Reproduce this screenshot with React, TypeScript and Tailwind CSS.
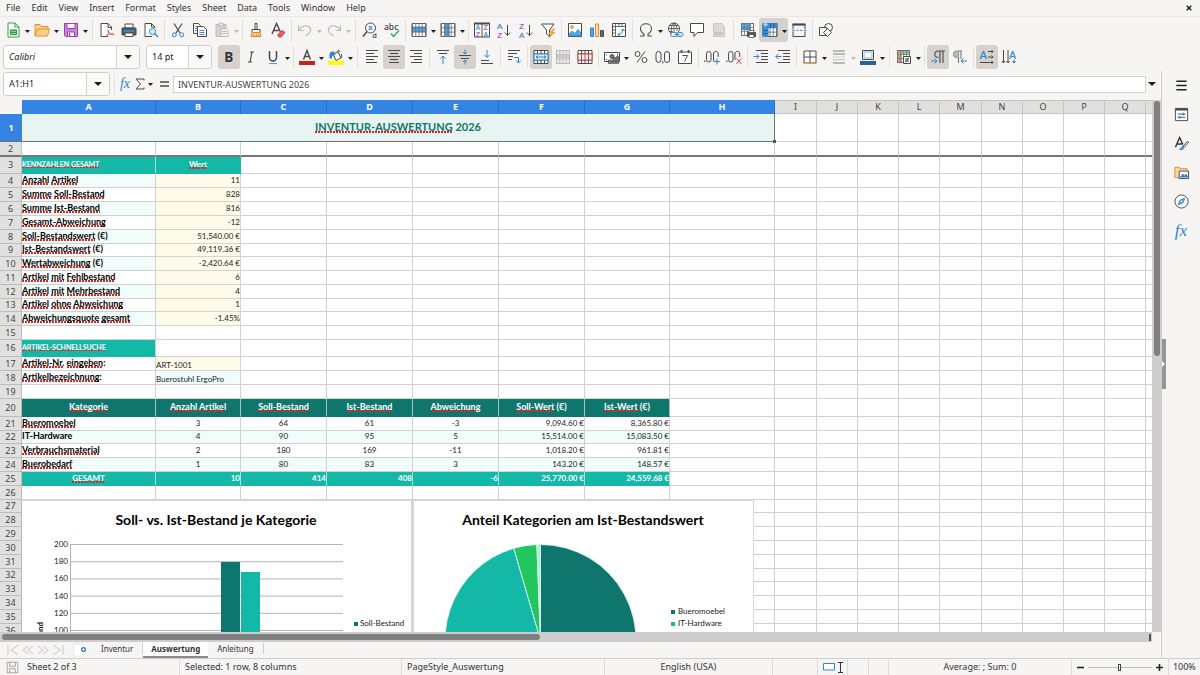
import React from "react";
import type { ReactNode } from "react";

/* ---------- shared pieces ---------- */

const INK = "#4a4a4a";
const BLUE = "#2f86cf";
const GRAY = "#b9b9b7";

function Svg({ children, size = 16 }: { children: ReactNode; size?: number }) {
  return (
    <svg width={size} height={size} viewBox="0 0 16 16" fill="none" stroke={INK} strokeWidth="1" aria-hidden="true" className="overflow-visible">
      {children}
    </svg>
  );
}

function Caret({ off = false, big = false }: { off?: boolean; big?: boolean }) {
  return (
    <svg width={big ? 8 : 5} height={big ? 4 : 3} viewBox="0 0 8 4" preserveAspectRatio="none" aria-hidden="true">
      <path d="M0 0h8L4 4z" fill={off ? GRAY : "#1c1c1c"} />
    </svg>
  );
}

type Tool = { name: string; icon?: ReactNode; menu?: boolean; on?: boolean; off?: boolean; sep?: "s" | "w" };

function Tools({ items }: { items: Tool[] }) {
  return (
    <>
      {items.map((t, i) =>
        t.sep ? (
          <span key={i} className={t.sep === "w" ? "flex h-[22px] w-[7px] shrink-0 justify-center" : "flex h-[22px] w-[5px] shrink-0 justify-center"}>
            <span className="w-px bg-[#e2e1df]" />
          </span>
        ) : (
          <span key={i} className={t.on ? "flex h-6 shrink-0 rounded-[3px] bg-[#d5d1cd]" : "flex h-6 shrink-0"}>
            <button type="button" aria-label={t.name} disabled={t.off} className="flex h-6 w-[22px] items-center justify-center">
              {t.icon}
            </button>
            {t.menu && (
              <button type="button" aria-label={t.name + " options"} className="flex h-6 w-[7px] items-center justify-center pt-[2px]">
                <Caret off={t.off} />
              </button>
            )}
          </span>
        ),
      )}
    </>
  );
}

const S: Tool = { name: "", sep: "s" };
const W: Tool = { name: "", sep: "w" };

/* ---------- icons ---------- */

const grid = (x: number, y: number, w: number, h: number, stroke = "#777") => (
  <path
    d={`M${x} ${y}h${w}v${h}h-${w}zM${x} ${y + h / 3}h${w}M${x} ${y + (2 * h) / 3}h${w}M${x + w / 4} ${y}v${h}M${x + w / 2} ${y}v${h}M${x + (3 * w) / 4} ${y}v${h}`}
    stroke={stroke}
    strokeWidth="0.8"
  />
);

const glyph = (s: string, x: number, y: number, size: number, fill: string, weight = 400) => (
  <text x={x} y={y} fontSize={size} fill={fill} stroke="none" fontFamily="Noto Sans, sans-serif" fontWeight={weight}>
    {s}
  </text>
);

const letter = (s: string, x: number, y: number, size: number, fill: string) => (
  <text x={x} y={y} fontSize={size} fill={fill} stroke={fill} strokeWidth="0.2" fontFamily="Liberation Sans, sans-serif">
    {s}
  </text>
);

const bars = (list: number[][], stroke = INK) => (
  <path d={list.map(([x, y, w]) => `M${x} ${y}h${w}`).join("")} stroke={stroke} />
);

const I: Record<string, ReactNode> = {
  new: (
    <Svg>
      <path d="M3 1h7l4 4v10H3z" fill="#fff" stroke="#2f9e44" />
      <path d="M10 1v4h4" stroke="#2f9e44" />
      <path d="M5 7.500h7v5.500H5z" fill="#2f9e44" stroke="none" />
      <path d="M6 9.500h5M6 11.500h5" stroke="#d8f3dc" strokeWidth="0.600" />
    </Svg>
  ),
  open: (
    <Svg>
      <path d="M1 14V2.500h5l1.500 2H14V7" fill="#f9d28a" stroke="#e0912f" />
      <path d="M1 14L3.500 7H15.500L13.500 14z" fill="#fbd08a" stroke="#e0912f" />
    </Svg>
  ),
  save: (
    <Svg>
      <path d="M1.500 1.500h13v13h-12l-1-1z" fill="#c987d6" stroke="#9c3fb0" />
      <path d="M4 1.500h8v5H4z" fill="#fff" stroke="#9c3fb0" />
      <path d="M4.500 10h7v4.500h-7z" fill="#fff" stroke="#9c3fb0" />
      <path d="M6.500 11v3.500" stroke="#9c3fb0" strokeWidth="1.500" />
    </Svg>
  ),
  pdf: (
    <Svg>
      <path d="M9 14.500H2V1.500h7l3.500 3.500v3" fill="#fff" />
      <path d="M9 1.500v4h3.500" />
      <path d="M7 14.500c2-2 3-4 2.500-6s-1.500 0 .5 2 3 2.500 4.500 2.200-.5-1.500-3-.8-4 1.600-4.500 2.600z" stroke="#e0525b" strokeWidth="0.900" />
    </Svg>
  ),
  print: (
    <Svg>
      <path d="M4 2h8v4H4z" fill="#fff" />
      <path d="M1 6h14v7H1z" fill="#5a5a5a" stroke="#4a4a4a" />
      <path d="M3 8h10v2H3z" fill={BLUE} stroke="none" />
      <path d="M4 11h8v3.500H4z" fill="#fff" />
    </Svg>
  ),
  preview: (
    <Svg>
      <path d="M12 6V5L8.500 1.500H2v13h7" fill="#fff" />
      <path d="M8.500 1.500V5H12" />
      <circle cx="9.500" cy="9.500" r="3" stroke={BLUE} fill="#dcecfa" />
      <path d="M11.700 11.700L15 15" stroke={BLUE} strokeWidth="1.300" />
    </Svg>
  ),
  cut: (
    <Svg>
      <path d="M4 1.500l6 9.500M12 1.500L6 11" strokeWidth="1.200" />
      <circle cx="4.300" cy="12.800" r="2" stroke={BLUE} />
      <circle cx="11.700" cy="12.800" r="2" stroke={BLUE} />
    </Svg>
  ),
  copy: (
    <Svg>
      <path d="M5.500 11.500h-4v-10h5l2 2" fill="#fff" />
      <path d="M5.500 4.500h6l3 3v7h-9z" fill="#fff" />
      <path d="M7.500 8.500h5M7.500 10.500h5M7.500 12.500h5M3 4.500h2M3 6.500h2M3 8.500h2" stroke={BLUE} strokeWidth="0.900" />
    </Svg>
  ),
  paste: (
    <Svg>
      <path d="M2 2.500h10v12H2z" fill="#d4d3d1" stroke="#bbbab8" />
      <path d="M5 1h4v3H5z" fill="#eee" stroke="#bbbab8" />
      <path d="M7 6.500h5l2 2v6H7z" fill="#f2f1f0" stroke="#bbbab8" />
      <path d="M8.500 9.500h4M8.500 11.500h4" stroke="#bbbab8" />
    </Svg>
  ),
  brush: (
    <Svg>
      <path d="M7 1.500h2v6H7z" fill="#fff" />
      <path d="M4 7.500h8v3H4z" fill="#fff" />
      <path d="M4 10.500h8l1 4H3z" fill="#fbd08a" stroke="#e0852f" />
      <path d="M6 12v2M8.500 12v2M10.500 12v2" stroke="#e0852f" strokeWidth="0.700" />
    </Svg>
  ),
  clear: (
    <Svg>
      <path d="M2 12L6.500 1.500 10.500 10M4 8.500h5" strokeWidth="1.400" />
      <path d="M7.500 13l4.500-4.500 3 2-4 4.500H9z" fill="#ee5560" stroke="#d93f4b" />
    </Svg>
  ),
  undo: (
    <Svg>
      <path d="M1.500 3.500v5h5M1.500 8.500C4 4 9 2.500 12 5s2 6-3.500 9" stroke={GRAY} strokeWidth="1.100" />
    </Svg>
  ),
  redo: (
    <Svg>
      <path d="M14.500 3.500v5h-5M14.500 8.500C12 4 7 2.500 4 5s-2 6 3.500 9" stroke={GRAY} strokeWidth="1.100" />
    </Svg>
  ),
  find: (
    <Svg>
      <circle cx="8.500" cy="6" r="5" fill="#fff" />
      <path d="M5 9.500L1 14.500" strokeWidth="1.500" />
      {letter("a", 6.2, 8, 7.500, BLUE)}
      {letter("d", 10.500, 15.500, 7.500, INK)}
    </Svg>
  ),
  spell: (
    <Svg>
      {glyph("abc", 0, 7.500, 8.500, "#3c3c3c", 500)}
      <path d="M7 11.500l2.500 3L15 8.500" stroke="#2fa56a" strokeWidth="1.400" />
    </Svg>
  ),
  row: (
    <Svg>
      <path d="M1 1.500h14v13H1z" fill="#fff" />
      <path d="M1 5h14v4.500H1z" fill="#53a4e6" stroke={BLUE} strokeWidth="0.800" />
      {grid(1.500, 1.500, 13, 13, "#6a6a6a")}
    </Svg>
  ),
  col: (
    <Svg>
      <path d="M1 1.500h14v13H1z" fill="#fff" />
      <path d="M4.700 1.500h4.500v13H4.700z" fill="#53a4e6" stroke={BLUE} strokeWidth="0.800" />
      {grid(1.500, 1.500, 13, 13, "#6a6a6a")}
    </Svg>
  ),
  sort: (
    <Svg>
      <path d="M.5 1.500h15v13.500H.5z" fill="#fff" />
      <path d="M0 1.500h16" strokeWidth="2" />
      <path d="M8 2v13" />
      {letter("A", 1.800, 8, 6.500, BLUE)}
      {letter("Z", 2, 14.500, 6.500, "#a349b5")}
      {letter("Z", 9.800, 8, 6.500, "#a349b5")}
      {letter("A", 9.600, 14.500, 6.500, BLUE)}
    </Svg>
  ),
  asc: (
    <Svg>
      {letter("A", 1, 6.800, 8, BLUE)}
      {letter("Z", 1.200, 15.500, 8, "#a349b5")}
      <path d="M11.500 3v10M8.800 10.500l2.700 3 2.700-3" />
    </Svg>
  ),
  desc: (
    <Svg>
      {letter("Z", 1.200, 6.800, 8, "#a349b5")}
      {letter("A", 1, 15.500, 8, BLUE)}
      <path d="M11.500 3v10M8.800 10.500l2.700 3 2.700-3" />
    </Svg>
  ),
  filter: (
    <Svg>
      <path d="M1.500 2h12.500L9.500 8v6.500L6.500 12V8z" fill="#fff" />
      <path d="M12.500 7L8.500 12h3L9 15.500 15 10.500h-3L14.500 7z" fill="#f7b35a" stroke="#e68a22" strokeWidth="0.600" />
    </Svg>
  ),
  image: (
    <Svg>
      <path d="M1.500 1.500h13v13h-13z" fill="#fff" />
      <circle cx="5" cy="5" r="1.500" fill="#f7b35a" stroke="#e68a22" strokeWidth="0.700" />
      <path d="M2 12l3-3 3 2.500 3-4L14 11v3H2z" fill="#53a4e6" stroke={BLUE} strokeWidth="0.800" />
    </Svg>
  ),
  chart: (
    <Svg>
      <path d="M1.500 6h3v8.500h-3z" fill="#53a4e6" stroke={BLUE} />
      <path d="M6.500 2h3v12.500h-3z" fill="#fde0b2" stroke="#e68a22" />
      <path d="M11.500 8.500h3v6h-3z" fill="#6a6a6a" />
    </Svg>
  ),
  pivot: (
    <Svg>
      <path d="M1.500 1.500h13v13h-13z" fill="#fff" />
      <path d="M1.500 4.500h13M4.500 1.500v13M8 1.500v3M11 1.500v3M1.500 8h3M1.500 11h3" strokeWidth="0.800" />
      <path d="M7 12.500c3 0 5-2 5-5M10.500 9L12 7l1.700 2M8.700 11L6.800 12.500l2 1.500" stroke={BLUE} />
    </Svg>
  ),
  omega: (
    <Svg>
      <path d="M2 14h4v-2C3.500 10.500 2.500 8.500 2.500 6.500 2.500 3.700 5 1.800 8 1.800s5.500 1.900 5.500 4.700c0 2-1 4-3.500 5.500v2h4" strokeWidth="1.100" />
    </Svg>
  ),
  link: (
    <Svg>
      <circle cx="7" cy="6.500" r="5.500" fill="#fff" />
      <path d="M1.500 6.500h11M7 1v9M7 1C3.500 4 3.500 9 6 11.500M7 1c3 2.500 3.500 6 2.500 8M2.500 3.500h9M2.500 9.500h3" strokeWidth="0.800" />
      <path d="M5 10h11v5H5z" fill="#f6f5f4" stroke="none" />
      <path d="M5.500 10.500h3a1.800 1.800 0 0 1 0 4h-3a1.800 1.800 0 0 1 0-4zM11.500 10.500h2.500a1.800 1.800 0 0 1 0 4h-2.500a1.800 1.800 0 0 1 0-4z" stroke={BLUE} />
      <path d="M7.500 12.500h5" stroke={BLUE} />
    </Svg>
  ),
  comment: (
    <Svg>
      <path d="M1.500 1.500h13v9H8.500l-3.500 4v-4H1.500z" fill="#fff" />
    </Svg>
  ),
  hf: (
    <Svg>
      <path d="M2.500 1.500h8l3 3v10h-11z" fill="#dbdad8" stroke="#c6c5c3" />
      <path d="M4 10h8v3H4z" fill="#c6c5c3" stroke="none" />
    </Svg>
  ),
  area: (
    <Svg>
      <path d="M1.500 1.500h12v12h-12z" fill="#fff" />
      <path d="M1.500 1.500h8.500v6H1.500z" fill="#53a4e6" stroke={BLUE} />
      {grid(1.500, 1.500, 12, 12)}
      <path d="M7.500 10.500h8v4h-8z" fill="#555" />
      <path d="M9 8.500h5v2H9zM9 12.500h5v3H9z" fill="#fff" strokeWidth="0.800" />
    </Svg>
  ),
  freeze: (
    <Svg>
      <path d="M1 1.500h14v13H1z" fill="#fff" />
      {grid(1.500, 1.500, 13, 13, "#666")}
      <path d="M1 1.500h14v4H6v9H1z" fill="#3b8fd8" stroke={BLUE} />
      <path d="M1.500 8.500h4M1.500 11.500h4M8.500 1.500v4M12 1.500v4" stroke="#175a9c" />
      <path d="M3.500 0v5M1 2.500h5M1.800 .8l3.400 3.400M5.200 .8L1.800 4.200" stroke="#d5e8f9" strokeWidth="0.600" />
    </Svg>
  ),
  split: (
    <Svg>
      <path d="M1.500 2.500h13" strokeWidth="2.200" />
      <path d="M2 2v5M14 2v5M2 9.500v5h12v-5" />
      <path d="M1 8.300h3M5.500 8.300h2M9 8.300h2M12.500 8.300h3" stroke={BLUE} />
    </Svg>
  ),
  shapes: (
    <Svg>
      <circle cx="10.500" cy="5.500" r="4" fill="#f6f5f4" />
      <path d="M1.500 5.500h7v8h-7z" fill="#f6f5f4" />
      <path d="M9.500 6.500l4 4-4 4-4-4z" fill="#f6f5f4" />
    </Svg>
  ),
  bold: <Svg>{glyph("B", 3.300, 13, 13.500, "#333", 700)}</Svg>,
  italic: (
    <Svg>
      <path d="M7 3h4M5 13h4M9 3L7 13" strokeWidth="1.200" />
    </Svg>
  ),
  under: (
    <Svg>
      <path d="M4.500 2v6.500a3.500 3.500 0 0 0 7 0V2" strokeWidth="1.500" />
      <path d="M4 14.500h8" stroke="#53a4e6" strokeWidth="1.200" />
    </Svg>
  ),
  fcolor: (
    <Svg>
      <path d="M4.500 10.500L8 1.500l3.500 9M5.500 7.500h5" strokeWidth="1.400" />
      <path d="M0 12h16v4H0z" fill="#c9211e" stroke="none" />
    </Svg>
  ),
  bcolor: (
    <Svg>
      <path d="M5 5l5-2 3 6-5 2.500z" fill="#fff" />
      <path d="M10 3c-1-2 1.500-2.500 2 0M13 5c1.500 1 .5 3.500 0 4" />
      <path d="M1.500 9.500V5c0-1.500 2-3 4-2.500L8 5l-4 2v2.500z" fill={BLUE} stroke="none" />
      <path d="M0 12h16v4H0z" fill="#ffff00" stroke="none" />
    </Svg>
  ),
  left: <Svg>{bars([[2, 1.500, 12], [2, 4.500, 8], [2, 7.500, 12], [2, 10.500, 8], [2, 13.500, 11]])}</Svg>,
  center: <Svg>{bars([[2, 1.500, 12], [4, 4.500, 8], [2, 7.500, 12], [4, 10.500, 8], [3, 13.500, 10]])}</Svg>,
  right: <Svg>{bars([[2, 1.500, 12], [6, 4.500, 8], [2, 7.500, 12], [6, 10.500, 8], [3, 13.500, 11]])}</Svg>,
  top: (
    <Svg>
      {bars([[2, 1.500, 12], [4, 4.500, 8]])}
      <path d="M8 15V7.500M5.500 9.500L8 7l2.500 2.500" stroke={BLUE} />
    </Svg>
  ),
  middle: (
    <Svg>
      {bars([[2, 6.500, 12], [4, 9.500, 8]])}
      <path d="M8 .5v4.500M6 3l2 2 2-2M8 15.500v-4.500M6 13l2-2 2 2" stroke={BLUE} />
    </Svg>
  ),
  bottom: (
    <Svg>
      {bars([[2, 14.500, 12], [2, 11.500, 8]])}
      <path d="M8 1v7M5.500 6L8 8.500 10.500 6" stroke={BLUE} />
    </Svg>
  ),
  wrap: (
    <Svg>
      {bars([[2, 1.500, 12], [2, 4.500, 9], [2, 7.500, 5], [2, 10.500, 4]])}
      <path d="M8 8.500h4.500V13M10 11.500l2.500 2.500 2.500-2.500" stroke={BLUE} />
    </Svg>
  ),
  merge: (
    <Svg>
      <path d="M1 1.500h14v13H1z" fill="#fff" />
      <path d="M1 5h14M1 11h14M4.500 1.500V5M8 1.500V5M11.500 1.500V5M4.500 11v3.500M8 11v3.500M11.500 11v3.500" />
      <path d="M1 5h14v6H1z" fill="#e3f1fc" stroke={BLUE} />
      <path d="M3 8h10M5 6.500L3 8l2 1.500M11 6.500L13 8l-2 1.500" stroke={BLUE} />
    </Svg>
  ),
  mergeoff: (
    <Svg>
      <path d="M1.500 1.500h13v13h-13z" fill="#ecebea" stroke={GRAY} />
      {grid(1.500, 1.500, 13, 13, GRAY)}
      <path d="M2 5.500h12v4H2z" fill="#c9c8c6" stroke="none" />
    </Svg>
  ),
  unmerge: (
    <Svg>
      <path d="M1 1.500h14v13H1z" fill="#fff" />
      <path d="M1 5h14M1 11h14M4.500 1.500V5M8 1.500V5M11.500 1.500V5M4.500 11v3.500M8 11v3.500M11.500 11v3.500" />
      <path d="M1 5h14v6H1zM4.500 5v6M8 5v6M11.500 5v6" fill="#fff" stroke="#d6403f" />
    </Svg>
  ),
  money: (
    <Svg>
      <path d="M.5 3.500h15v9H.5z" fill="#fff" />
      <circle cx="8" cy="7.500" r="2" fill="#777" />
      <path d="M2.500 5.500v1M13.500 5v1.500M2.500 10v1" />
      <path d="M4.500 11h4v3.500h-4zM9.500 8.500h2v6h-2zM12.500 7.500h2v7h-2z" fill="#777" strokeWidth="0.700" />
    </Svg>
  ),
  percent: (
    <Svg>
      <circle cx="4.500" cy="5" r="2.500" />
      <circle cx="11.500" cy="11" r="2.500" />
      <path d="M12 2.500L4 13.500" />
    </Svg>
  ),
  number: (
    <Svg>
      <rect x="1" y="2.500" width="5" height="11" rx="2.500" />
      <rect x="9.500" y="2.500" width="5" height="11" rx="2.500" />
      <path d="M7.800 12v2.500" />
    </Svg>
  ),
  date: (
    <Svg>
      <path d="M1.500 3h13v11.500h-13z" fill="#fff" />
      <path d="M4.500 1v3M11.500 1v3" strokeWidth="1.600" />
      <path d="M5.500 6.500h5L7.500 12.500" />
    </Svg>
  ),
  decadd: (
    <Svg>
      <path d="M.8 11.500v1.500" strokeWidth="1.200" />
      <rect x="2.500" y="2.500" width="4.500" height="10.500" rx="2.200" />
      <path d="M9.500 11V5c0-3.500 4.700-3.500 4.700 0v3M9.500 11c0 1 .5 1.700 1 2" />
      <path d="M10 12.500h6M13 9.500v6" stroke={BLUE} />
    </Svg>
  ),
  decdel: (
    <Svg>
      <path d="M.8 11.500v1.500" strokeWidth="1.200" />
      <rect x="2.500" y="2.500" width="4.500" height="10.500" rx="2.200" />
      <path d="M9 11V5c0-3.500 4.700-3.500 4.700 0v3" />
      <path d="M10.500 9.500l5 5.500M15.500 9.500l-5 5.500" stroke="#d6403f" />
    </Svg>
  ),
  indent: (
    <Svg>
      {bars([[3, 1.500, 12], [8, 4.500, 7], [8, 7.500, 7], [8, 10.500, 7], [3, 13.500, 12]])}
      <path d="M.5 7.500H6M3.500 5L6 7.500l-2.500 2.500" stroke={BLUE} />
    </Svg>
  ),
  outdent: (
    <Svg>
      {bars([[3, 1.500, 12], [8, 4.500, 7], [8, 7.500, 7], [8, 10.500, 7], [3, 13.500, 12]])}
      <path d="M.8 7.500H6.500M3.300 5L.8 7.500l2.500 2.500" stroke={BLUE} />
    </Svg>
  ),
  borders: (
    <Svg>
      <path d="M2 2h12v12H2z" fill="#fff" />
      <path d="M2 8h12M8 2v12" />
      <path d="M1.500 14.300h13" stroke="#f0a33c" />
    </Svg>
  ),
  bstyle: (
    <Svg>
      <path d="M2 2h12M2 5h12" stroke={GRAY} strokeWidth="2" />
      <path d="M2 8h12" stroke={GRAY} strokeDasharray="1.500 1" />
      <path d="M2 10.800h12" stroke={GRAY} />
      <path d="M2 14h12" stroke={GRAY} strokeWidth="2" />
    </Svg>
  ),
  bcol: (
    <Svg>
      <path d="M2.500 1.500h11v9h-11z" fill="#fff" />
      <path d="M4 3h8v6H4z" stroke="#7fb6e6" />
      <path d="M0 12h16v4H0z" fill="#2a6099" stroke="none" />
    </Svg>
  ),
  cond: (
    <Svg>
      <path d="M1.500 1.500h12v12h-12z" fill="#fff" />
      <path d="M2 2h4v3H2zM2 9h4v4H2z" fill="#f28b82" stroke="none" />
      <path d="M6 2h7v3H6zM2 5h4v4H2z" fill="#7ccf8a" stroke="none" />
      {grid(1.500, 1.500, 12, 12)}
      <path d="M7.500 7.500h7v7h-7z" fill="#fff" />
      <path d="M9 10h4M9 12h4M12.300 8.800l-2.500 4.600" />
    </Svg>
  ),
  ltrp: (
    <Svg>
      <path d="M8.500 8.500C3 8.500 4 2 8.500 2H15M10 2v12M13 2v12" strokeWidth="1.100" />
      <path d="M1 12h6M4.500 9.500L7 12l-2.500 2.500" stroke={BLUE} />
    </Svg>
  ),
  rtlp: (
    <Svg>
      <path d="M5.500 8.500C0 8.500 1 2 5.500 2H10M6.500 2v12M9 2v8" stroke="#777" strokeWidth="1.100" />
      <path d="M5.500 8.500C1 8.500 2 2 5.500 2h1v6.500z" fill="#bbb" stroke="none" />
      <path d="M15 12H9M11.500 9.500L9 12l2.500 2.500" stroke={BLUE} />
    </Svg>
  ),
  ltr: (
    <Svg>
      {letter("A", 0.500, 9.500, 11, BLUE)}
      <path d="M9 2.500h5M12.500 1L14 2.500 12.500 4M9 8h5M12.500 6.500L14 8l-1.500 1.500M1 13.500h13M12.500 12l1.500 1.500-1.500 1.500" />
    </Svg>
  ),
  ttb: (
    <Svg>
      {letter("A", 8, 9.500, 10.500, BLUE)}
      <path d="M2.500 1v13M1 12l1.500 2L4 12M7 1v13M5.500 12L7 14l1.500-2M13 11v3M11.500 12.500L13 14l1.500-1.500" />
    </Svg>
  ),
};

const standardTools: Tool[] = [
  { name: "New", icon: I.new, menu: true },
  { name: "Open", icon: I.open, menu: true },
  { name: "Save", icon: I.save, menu: true },
  W,
  { name: "Export as PDF", icon: I.pdf },
  { name: "Print", icon: I.print },
  { name: "Print preview", icon: I.preview },
  S,
  { name: "Cut", icon: I.cut },
  { name: "Copy", icon: I.copy },
  { name: "Paste", icon: I.paste, menu: true, off: true },
  S,
  { name: "Clone formatting", icon: I.brush },
  { name: "Clear formatting", icon: I.clear },
  S,
  { name: "Undo", icon: I.undo, menu: true, off: true },
  { name: "Redo", icon: I.redo, menu: true, off: true },
  W,
  { name: "Find and replace", icon: I.find },
  { name: "Spelling", icon: I.spell },
  S,
  { name: "Row", icon: I.row, menu: true },
  { name: "Column", icon: I.col, menu: true },
  S,
  { name: "Sort", icon: I.sort },
  { name: "Sort ascending", icon: I.asc },
  { name: "Sort descending", icon: I.desc },
  { name: "AutoFilter", icon: I.filter },
  S,
  { name: "Insert image", icon: I.image },
  { name: "Insert chart", icon: I.chart },
  { name: "Pivot table", icon: I.pivot },
  S,
  { name: "Special character", icon: I.omega, menu: true },
  { name: "Insert hyperlink", icon: I.link },
  { name: "Insert comment", icon: I.comment },
  { name: "Headers and footers", icon: I.hf, off: true },
  W,
  { name: "Define print area", icon: I.area },
  { name: "Freeze rows and columns", icon: I.freeze, menu: true, on: true },
  { name: "Split window", icon: I.split },
  S,
  { name: "Show draw functions", icon: I.shapes },
];

const formatTools: Tool[] = [
  { name: "Bold", icon: I.bold, on: true },
  { name: "Italic", icon: I.italic },
  { name: "Underline", icon: I.under, menu: true },
  S,
  { name: "Font color", icon: I.fcolor, menu: true },
  { name: "Background color", icon: I.bcolor, menu: true },
  W,
  { name: "Align left", icon: I.left },
  { name: "Center horizontally", icon: I.center, on: true },
  { name: "Align right", icon: I.right },
  S,
  { name: "Align top", icon: I.top },
  { name: "Center vertically", icon: I.middle, on: true },
  { name: "Align bottom", icon: I.bottom },
  S,
  { name: "Wrap text", icon: I.wrap },
  S,
  { name: "Merge and center cells", icon: I.merge, on: true },
  { name: "Merge cells", icon: I.mergeoff, off: true },
  { name: "Unmerge cells", icon: I.unmerge },
  S,
  { name: "Format as currency", icon: I.money, menu: true },
  { name: "Format as percent", icon: I.percent },
  { name: "Format as number", icon: I.number },
  { name: "Format as date", icon: I.date },
  S,
  { name: "Add decimal place", icon: I.decadd },
  { name: "Delete decimal place", icon: I.decdel },
  S,
  { name: "Increase indent", icon: I.indent },
  { name: "Decrease indent", icon: I.outdent },
  S,
  { name: "Borders", icon: I.borders, menu: true },
  { name: "Border style", icon: I.bstyle, menu: true, off: true },
  { name: "Border color", icon: I.bcol, menu: true },
  W,
  { name: "Conditional formatting", icon: I.cond, menu: true },
  S,
  { name: "Left to right", icon: I.ltrp, on: true },
  { name: "Right to left", icon: I.rtlp },
  S,
  { name: "Text direction from left to right", icon: I.ltr, on: true },
  { name: "Text direction from top to bottom", icon: I.ttb },
];

function Combo({ label, value, className, italic }: { label: string; value: string; className: string; italic?: boolean }) {
  return (
    <span className={"flex h-6 shrink-0 overflow-hidden rounded-[3px] border border-[#cfccc9] bg-white " + className}>
      <input
        aria-label={label}
        defaultValue={value}
        className={"min-w-0 flex-1 bg-transparent pl-[5px] text-[9px] text-[#222] outline-none " + (italic ? "italic" : "")}
      />
      <button type="button" aria-label={label + " list"} className="flex w-[23px] items-center justify-center border-l border-[#d5d2cf] bg-[#f9f9f8]">
        <Caret big />
      </button>
    </span>
  );
}

/* ---------- sheet data ---------- */

const columns: [string, number][] = [
  ["A", 134], ["B", 85], ["C", 86], ["D", 86], ["E", 86], ["F", 86], ["G", 85], ["H", 105], ["I", 42],
  ["J", 41], ["K", 41], ["L", 41], ["M", 42], ["N", 41], ["O", 41], ["P", 41], ["Q", 41],
];

type Kind = "label" | "labelMint" | "input" | "lookup" | "entry" | "section" | "sectionC" | "head" | "num" | "numMint" | "cen" | "cenMint" | "total" | "totalC";

const kinds: Record<Kind, string> = {
  label: "text-left text-[9px] leading-[10px] font-bold text-black border-[#d0d0d0]",
  labelMint: "text-left text-[9px] leading-[10px] font-bold text-black bg-[#f0fdfa] border-[#d0d0d0]",
  input: "text-right text-[8px] leading-[10px] text-[#222] bg-[#fffbeb] border-[#d6d4cc]",
  entry: "text-left text-[8px] leading-[14px] text-[#222] bg-[#fffbeb] border-[#d6d4cc]",
  lookup: "text-left text-[8px] leading-[14px] text-[#222] bg-[#f0fdfa] border-[#d0d0d0]",
  section: "text-left text-[7px] leading-[10px] font-bold text-white bg-[#14b8a6] border-b-[#14b8a6] border-r-[#a5ded7]",
  sectionC: "text-center text-[8px] leading-[10px] font-bold text-white bg-[#14b8a6] border-b-[#14b8a6] border-r-[#14b8a6]",
  head: "text-center text-[9px] leading-[10px] font-bold text-white bg-[#0f766e] border-b-[#0f766e] border-r-[#a3c5c2]",
  num: "text-right text-[8px] leading-[10px] text-[#222] border-[#d0d0d0]",
  numMint: "text-right text-[8px] leading-[10px] text-[#222] bg-[#f0fdfa] border-[#d0d0d0]",
  cen: "text-center text-[8px] leading-[10px] text-[#222] border-[#d0d0d0]",
  cenMint: "text-center text-[8px] leading-[10px] text-[#222] bg-[#f0fdfa] border-[#d0d0d0]",
  total: "text-right text-[8px] leading-[10px] font-bold text-white bg-[#14b8a6] border-b-[#14b8a6] border-r-[#a5ded7]",
  totalC: "text-center text-[8px] leading-[10px] font-bold text-white bg-[#14b8a6] border-b-[#14b8a6] border-r-[#a5ded7]",
};

const checked: Kind[] = ["label", "labelMint", "section", "sectionC", "head", "totalC"];

const kpis: [string, string][] = [
  ["Anzahl Artikel", "11"],
  ["Summe Soll-Bestand", "828"],
  ["Summe Ist-Bestand", "816"],
  ["Gesamt-Abweichung", "-12"],
  ["Soll-Bestandswert (€)", "51,540.00 €"],
  ["Ist-Bestandswert (€)", "49,119.36 €"],
  ["Wertabweichung (€)", "-2,420.64 €"],
  ["Artikel mit Fehlbestand", "6"],
  ["Artikel mit Mehrbestand", "4"],
  ["Artikel ohne Abweichung", "1"],
  ["Abweichungsquote gesamt", "-1.45%"],
];

const categories: string[][] = [
  ["Bueromoebel", "3", "64", "61", "-3", "9,094.60 €", "8,365.80 €"],
  ["IT-Hardware", "4", "90", "95", "5", "15,514.00 €", "15,083.50 €"],
  ["Verbrauchsmaterial", "2", "180", "169", "-11", "1,018.20 €", "961.81 €"],
  ["Buerobedarf", "1", "80", "83", "3", "143.20 €", "148.57 €"],
];

const heights = [
  28, 15, 17, 14, 14, 14, 14, 14, 13, 14, 14, 14, 13, 14, 14, 17, 14, 14, 14, 18, 14, 13, 14, 14, 14, 14, 13, 14, 14, 14,
  14, 13, 14, 14, 14, 14,
];

const cells: Record<number, [string, Kind][]> = {
  3: [["KENNZAHLEN GESAMT", "section"], ["Wert", "sectionC"]],
  16: [["ARTIKEL-SCHNELLSUCHE", "section"]],
  17: [["Artikel-Nr. eingeben:", "label"], ["ART-1001", "entry"]],
  18: [["Artikelbezeichnung:", "label"], ["Buerostuhl ErgoPro", "lookup"]],
  20: ["Kategorie", "Anzahl Artikel", "Soll-Bestand", "Ist-Bestand", "Abweichung", "Soll-Wert (€)", "Ist-Wert (€)"].map(
    (t) => [t, "head"] as [string, Kind],
  ),
  25: ["GESAMT", "10", "414", "408", "-6", "25,770.00 €", "24,559.68 €"].map(
    (t, i) => [t, i === 0 ? "totalC" : "total"] as [string, Kind],
  ),
};
kpis.forEach(([a, b], i) => {
  cells[4 + i] = [[a, i % 2 === 0 ? "labelMint" : "label"], [b, "input"]];
});
categories.forEach((row, i) => {
  const mint = i % 2 === 1;
  cells[21 + i] = row.map((t, c) => [
    t,
    c === 0 ? (mint ? "labelMint" : "label") : c < 5 ? (mint ? "cenMint" : "cen") : mint ? "numMint" : "num",
  ]);
});

/* red zigzag under words the spell checker does not know */
const squiggle =
  "bg-[linear-gradient(45deg,transparent_30%,#dc2626_30%,#dc2626_60%,transparent_60%),linear-gradient(135deg,transparent_30%,#dc2626_30%,#dc2626_60%,transparent_60%)] bg-[length:3px_2px] bg-bottom-left bg-repeat-x";

function Checked({ text }: { text: string }) {
  return (
    <>
      {text.split(" ").map((word, i) => {
        const plain = /^[(\d]|^IT-/.test(word);
        const core = word.replace(/:$/, "");
        return (
          <React.Fragment key={i}>
            {i > 0 && " "}
            {plain ? word : <span className={squiggle}>{core}</span>}
            {!plain && word !== core && ":"}
          </React.Fragment>
        );
      })}
    </>
  );
}

function Sheet() {
  return (
    <table className="w-full table-fixed border-separate border-spacing-0 bg-white">
      <colgroup>
        <col className="w-[22px]" />
        {columns.map(([c, w]) => (
          <col key={c} style={{ width: w }} />
        ))}
        <col />
      </colgroup>
      <thead>
        <tr className="h-[14px] text-[9px] leading-[12px]">
          <th className="bg-[#f6f5f4] p-0" />
          {columns.map(([c], i) => (
            <th
              key={c}
              className={
                i < 8
                  ? "overflow-hidden border-r border-[#2b6fc2] bg-[#3584e4] p-0 font-bold text-white"
                  : "overflow-hidden border-t border-r border-b border-[#c4c4c4] bg-[#e0e0df] p-0 font-normal text-[#444]"
              }
            >
              <div className="h-3">{c}</div>
            </th>
          ))}
          <th className="border-t border-b border-[#c4c4c4] bg-[#e0e0df] p-0" />
        </tr>
      </thead>
      <tbody>
        {heights.map((h, r) => {
          const n = r + 1;
          const row = cells[n] ?? [];
          const frozen = n === 2;
          return (
            <tr key={n} style={{ height: h }}>
              <th
                className={
                  (n === 1
                    ? "bg-[#3584e4] font-bold text-white border-b border-[#6d7371]"
                    : frozen
                      ? "bg-[#e0e0df] font-normal text-[#444] border-b-2 border-b-[#777] border-r border-r-[#c4c4c4]"
                      : "bg-[#e0e0df] font-normal text-[#444] border-r border-b border-[#bdbdbd]") + " p-0 text-[9px] leading-[12px]"
                }
              >
                <div className="h-3">{n}</div>
              </th>
              {n === 1 && (
                <td colSpan={8} className="relative border-r border-b border-[#6d7371] bg-[#e8f4f1] p-0 text-center text-[11px] leading-[14px] font-bold text-[#0f766e]">
                  <div className="h-4 font-[Lato,sans-serif]">
                    <Checked text="INVENTUR-AUSWERTUNG 2026" />
                  </div>
                  <span className="absolute -right-[2px] -bottom-[2px] size-[3px] bg-[#555]" />
                </td>
              )}
              {Array.from({ length: n === 1 ? 10 : 18 }, (_, k) => {
                const c = n === 1 ? k + 8 : k;
                const cell = row[c];
                const edge = c === 17 ? "" : "border-r ";
                return (
                  <td
                    key={c}
                    className={
                      edge +
                      (frozen ? "border-b-2 border-r-[#d0d0d0] border-b-[#777] " : "border-b ") +
                      (cell ? kinds[cell[1]] + " " : frozen ? "" : "border-[#d0d0d0] ") +
                      "p-0 whitespace-nowrap"
                    }
                  >
                    {cell && (
                      <div className="h-3 font-[Lato,sans-serif]">
                        {checked.includes(cell[1]) ? <Checked text={cell[0]} /> : cell[0]}
                      </div>
                    )}
                  </td>
                );
              })}
            </tr>
          );
        })}
      </tbody>
    </table>
  );
}

/* ---------- charts ---------- */

function BarChart() {
  return (
    <svg width="390" height="140" viewBox="0 0 390 140" fontFamily="Lato, sans-serif" role="img" aria-label="Soll- vs. Ist-Bestand je Kategorie">
      <rect width="390" height="140" fill="#fff" />
      <path d="M389.500 0v140M0 .5h390" stroke="#d9d9d9" fill="none" />
      <text x="194" y="25" textAnchor="middle" fontSize="14" fontWeight="700">
        Soll- vs. Ist-Bestand je Kategorie
      </text>
      {[200, 180, 160, 140, 120, 100].map((v, i) => (
        <g key={v}>
          <path d={`M48 ${44.5 + i * 17.2}h273`} stroke="#b3b3b3" />
          <text x="46" y={47 + i * 17.2} textAnchor="end" fontSize="8" fill="#222">
            {v}
          </text>
        </g>
      ))}
      <path d="M48.500 45v95" stroke="#b3b3b3" />
      <rect x="199" y="62" width="19" height="78" fill="#0f766e" />
      <rect x="219" y="72" width="19" height="68" fill="#14b8a6" />
      <text transform="translate(21 151) rotate(-90)" fontSize="8" fontWeight="700">
        Bestand
      </text>
      <rect x="332" y="122" width="4" height="4" fill="#0f766e" />
      <text x="338" y="126" fontSize="8" fill="#222">
        Soll-Bestand
      </text>
      <rect x="332" y="133" width="4" height="4" fill="#14b8a6" />
      <text x="338" y="138" fontSize="8" fill="#222">
        Ist-Bestand
      </text>
    </svg>
  );
}

function PieChart() {
  const cx = 127.5;
  const cy = 140;
  const r = 95.5;
  const slices: [string, number, string][] = [
    ["Bueromoebel", 8365.8, "#0f766e"],
    ["IT-Hardware", 15083.5, "#14b8a6"],
    ["Verbrauchsmaterial", 961.81, "#22c55e"],
    ["Buerobedarf", 148.57, "#a7f3d0"],
  ];
  const total = slices.reduce((s, x) => s + x[1], 0);
  let at = 0;
  return (
    <svg width="341" height="140" viewBox="0 0 341 140" fontFamily="Lato, sans-serif" role="img" aria-label="Anteil Kategorien am Ist-Bestandswert">
      <rect width="341" height="140" fill="#fff" />
      <path d="M340.500 0v140M.5 0v140M0 .5h341" stroke="#d9d9d9" fill="none" />
      <text x="170" y="25" textAnchor="middle" fontSize="14" fontWeight="700">
        Anteil Kategorien am Ist-Bestandswert
      </text>
      {slices.map(([name, v, fill]) => {
        const a0 = (at / total) * 2 * Math.PI;
        at += v;
        const a1 = (at / total) * 2 * Math.PI;
        const p = (a: number) => `${cx + r * Math.sin(a)} ${cy - r * Math.cos(a)}`;
        return (
          <path key={name} d={`M${cx} ${cy}L${p(a0)}A${r} ${r} 0 ${a1 - a0 > Math.PI ? 1 : 0} 1 ${p(a1)}z`} fill={fill} stroke="#e6fff6" strokeWidth="0.800" />
        );
      })}
      {slices.slice(0, 3).map(([name, , fill], i) => (
        <g key={name}>
          <rect x="258" y={110 + i * 12} width="4" height="4" fill={fill} />
          <text x="265" y={114 + i * 12} fontSize="8" fill="#222">
            {name}
          </text>
        </g>
      ))}
    </svg>
  );
}

/* ---------- page ---------- */

const sidebar: [string, ReactNode][] = [
  ["Sidebar settings", <Svg size={15}><path d="M2.500 3.500h11M2.500 8h11M2.500 12.500h11" stroke="#222" strokeWidth="1.600" /></Svg>],
  ["Properties", <Svg size={15}><path d="M1.500 1.500h13v13h-13z" fill="#fff" /><path d="M1.500 2.500h13" strokeWidth="2.500" /><path d="M4 7.500h8M4 11h8" /><path d="M10 6v3M6 9.500v3" stroke={BLUE} /><path d="M9 7.500h3M4 11h3" stroke={BLUE} /></Svg>],
  ["Styles", <Svg size={15}><path d="M1.500 12L6 1.500 9.500 9M3 8.500h6" stroke="#333" strokeWidth="1.500" /><path d="M9.500 11L14.500 5.500l1 1L11 12z" fill="#fff" /><path d="M6 14.500c1 0 1.500-3 3-3.500l1.500 1.500c-.5 2-3 2.500-4.500 2z" fill="#53a4e6" stroke={BLUE} /></Svg>],
  ["Gallery", <Svg size={15}><path d="M1 13.500V2.500h4.500l1 1.500H14v9.500z" fill="#fbd9a6" stroke="#e0852f" /><path d="M5.500 6.500h10v8h-10z" fill="#fff" /><path d="M6.500 13l3-3.500 2 2 1.500-2 2 3.500z" fill={BLUE} stroke={BLUE} strokeWidth="0.600" /></Svg>],
  ["Navigator", <Svg size={15}><circle cx="8" cy="8" r="7" fill="#fff" /><path d="M4.500 11.500L6.500 6.500 11.500 4.500 9.500 9.500z" fill="#53a4e6" stroke={BLUE} /><circle cx="8" cy="8" r="1" fill="#fff" stroke="none" /></Svg>],
];

const statusCell = "flex min-w-0 shrink-0 items-center border-r border-[#dddbd9] whitespace-nowrap";

export default function App() {
  return (
    <div className="flex h-screen flex-col overflow-hidden bg-[#f6f5f4] font-['Noto_Sans',sans-serif] text-[9px] leading-[12px] text-[#333]">
      <nav className="flex h-[17px] shrink-0 items-center border-b border-[#e8e7e5] pl-[6px]">
        {["File", "Edit", "View", "Insert", "Format", "Styles", "Sheet", "Data", "Tools", "Window", "Help"].map((m) => (
          <button key={m} type="button" className="mr-[11px]">
            {m}
          </button>
        ))}
        <button type="button" aria-label="Close document" className="mr-2 ml-auto">
          <svg width="6" height="6" viewBox="0 0 6 6" aria-hidden="true">
            <path d="M.7.7l4.600 4.600M5.300.7L.7 5.300" stroke="#222" strokeWidth="1.500" />
          </svg>
        </button>
      </nav>

      <div className="flex h-[26px] shrink-0 items-center overflow-hidden pl-[2px]">
        <Tools items={standardTools} />
      </div>

      <div className="flex h-7 shrink-0 items-center overflow-hidden pl-[3px]">
        <Combo label="Font name" value="Calibri" italic className="w-[137px]" />
        <Combo label="Font size" value="14 pt" className="mx-[6px] w-[66px]" />
        <Tools items={formatTools} />
      </div>

      <div className="flex min-h-0 flex-1">
        <div className="flex min-w-0 flex-1 flex-col">
          <div className="flex h-[29px] shrink-0 items-center pb-[3px] pl-[3px]">
            <Combo label="Name box" value="A1:H1" className="w-[107px]" />
            <span className="ml-1 h-5 w-px bg-[#e2e1df]" />
            <button type="button" className="ml-1 w-3 font-['Liberation_Serif',serif] text-[14px] text-[#2f86cf] italic">
              fx
            </button>
            <button type="button" aria-label="Select function" className="ml-1 flex items-center gap-[3px]">
              <svg width="10" height="12" viewBox="0 0 10 12" fill="none" aria-hidden="true">
                <path d="M9 2.500V1H1l4.500 5L1 11h8V9.500" stroke={INK} />
              </svg>
              <Caret />
            </button>
            <button type="button" aria-label="Formula" className="ml-[7px]">
              <svg width="9" height="8" viewBox="0 0 9 8" aria-hidden="true">
                <path d="M0 2h9M0 6h9" stroke={INK} strokeWidth="1.600" />
              </svg>
            </button>
            <input
              aria-label="Input line"
              defaultValue="INVENTUR-AUSWERTUNG 2026"
              className="ml-1 h-[17px] min-w-0 flex-1 border border-[#d5d2cf] bg-white pl-1 text-[9px] text-[#444] outline-none"
            />
            <button type="button" aria-label="Expand formula bar" className="flex h-4 w-[15px] items-center justify-center pr-1">
              <Caret big />
            </button>
          </div>

          <div className="flex min-h-0 flex-1">
            <div className="flex min-w-0 flex-1 flex-col">
              <div className="relative min-h-0 flex-1 overflow-hidden">
                <Sheet />
                <div className="absolute top-[400px] left-[22px] flex gap-px">
                  <BarChart />
                  <PieChart />
                </div>
              </div>
              <div className="flex h-[10px] shrink-0 items-center bg-[#cdcdcd] pl-[2px]">
                <div className="h-[6px] w-[46.8%] rounded-full bg-[#808080]" />
                <div className="mr-px ml-auto h-[7px] w-[2px] bg-[#555]" />
              </div>
            </div>
            <div className="flex w-[9px] shrink-0 flex-col pb-[10px]">
              <div className="flex flex-1 justify-center bg-[#cdcdcd] pt-[1px]">
                <div className="h-[48%] w-[6px] rounded-full bg-[#808080]" />
              </div>
            </div>
          </div>

          <div className="flex h-4 shrink-0 items-stretch text-[8px]">
            <div className="flex items-center gap-px pl-[6px]">
              {["M2 1v10M12 1L5 6l7 5", "M7 2L2 6l5 4M12 2L7 6l5 4", "M2 2l5 4-5 4M7 2l5 4-5 4", "M2 1l7 5-7 5M12 1v10"].map((d, i) => (
                <button key={i} type="button" aria-label={["First sheet", "Previous sheet", "Next sheet", "Last sheet"][i]}>
                  <svg width="14" height="12" viewBox="0 0 14 12" fill="none" aria-hidden="true">
                    <path d={d} stroke="#d6d5d3" strokeWidth="1.400" />
                  </svg>
                </button>
              ))}
            </div>
            <button type="button" aria-label="Add sheet" className="ml-2 flex items-center">
              <svg width="14" height="14" viewBox="0 0 14 14" aria-hidden="true">
                <path d="M1 1h9v12H1z" fill="#fff" stroke="#dcdbd9" strokeWidth=".6" />
                <circle cx="10.500" cy="6.500" r="2.500" fill="#3b76c4" />
                <path d="M9 6.500h3M10.500 5v3" stroke="#fff" strokeWidth=".8" />
              </svg>
            </button>
            <button type="button" className="my-px mb-1 ml-[5px] border-r border-[#cfcdcb] px-[9px]">
              Inventur
            </button>
            <button type="button" className="border-b-2 border-[#8a8a8a] bg-white px-2 font-bold">
              Auswertung
            </button>
            <button type="button" className="my-px mb-1 border-r border-[#cfcdcb] px-[9px]">
              Anleitung
            </button>
          </div>
        </div>

        <aside className="relative flex w-[39px] shrink-0 flex-col items-center gap-[14px] border-l border-[#d0cecc] pt-[7px]">
          {sidebar.map(([name, icon]) => (
            <button key={name} type="button" aria-label={name}>
              {icon}
            </button>
          ))}
          <button type="button" aria-label="Functions" className="font-['Liberation_Serif',serif] text-[17px] leading-[15px] text-[#2f86cf] italic">
            fx
          </button>
          <button type="button" aria-label="Hide sidebar" className="absolute top-[268px] left-0 flex h-[50px] w-[4px] items-center bg-[#959595]">
            <svg width="3" height="6" viewBox="0 0 3 6" aria-hidden="true">
              <path d="M0 0l3 3-3 3z" fill="#fff" />
            </svg>
          </button>
        </aside>
      </div>

      <footer className="flex h-[17px] shrink-0 items-stretch border-t border-[#cfcdcb]">
        <div className={statusCell + " w-[15%] gap-2 pl-[6px]"}>
          <Svg size={13}>
            <path d="M1.500 1.500h13v13h-13zM4.500 1.500v5h7v-5M4.500 14.500v-5h7v5" stroke="#999" />
          </Svg>
          Sheet 2 of 3
        </div>
        <div className={statusCell + " w-[18.5%] pl-[5px]"}>Selected: 1 row, 8 columns</div>
        <div className={statusCell + " w-[16.9%] pl-[5px]"}>PageStyle_Auswertung</div>
        <div className={statusCell + " w-[14%] justify-center"}>English (USA)</div>
        <div className={statusCell + " w-[3.8%]"} />
        <div className={statusCell + " w-[2.5%] justify-center gap-[3px]"}>
          <svg width="12" height="8" viewBox="0 0 12 8" aria-hidden="true">
            <path d="M.5.5h11v6.500H.5z" fill="#fff" stroke={BLUE} />
          </svg>
          <svg width="5" height="11" viewBox="0 0 5 11" aria-hidden="true">
            <path d="M0 .5h5M0 10.500h5M2.500 0v11" stroke="#333" />
          </svg>
        </div>
        <div className={statusCell + " w-[1.7%]"} />
        <div className={statusCell + " w-[1.7%]"} />
        <div className={statusCell + " w-[15.2%] justify-center"}>Average: ; Sum: 0</div>
        <div className={statusCell + " w-[8.1%] gap-1 px-[5px]"}>
          <button type="button" aria-label="Zoom out" className="flex">
            <svg width="7" height="7" viewBox="0 0 7 7" aria-hidden="true">
              <path d="M0 3.500h7" stroke="#222" strokeWidth="1.600" />
            </svg>
          </button>
          <input
            type="range"
            aria-label="Zoom"
            min={0}
            max={200}
            defaultValue={98}
            className="h-[7px] min-w-0 flex-1 appearance-none bg-linear-to-b from-transparent from-43% via-[#888] via-43% to-transparent to-57% [&::-webkit-slider-thumb]:h-[7px] [&::-webkit-slider-thumb]:w-[3px] [&::-webkit-slider-thumb]:appearance-none [&::-webkit-slider-thumb]:border [&::-webkit-slider-thumb]:border-[#444] [&::-webkit-slider-thumb]:bg-white"
          />
          <button type="button" aria-label="Zoom in" className="flex">
            <svg width="7" height="7" viewBox="0 0 7 7" aria-hidden="true">
              <path d="M0 3.500h7M3.500 0v7" stroke="#222" strokeWidth="1.600" />
            </svg>
          </button>
        </div>
        <div className="flex flex-1 items-center justify-center">100%</div>
      </footer>
    </div>
  );
}
